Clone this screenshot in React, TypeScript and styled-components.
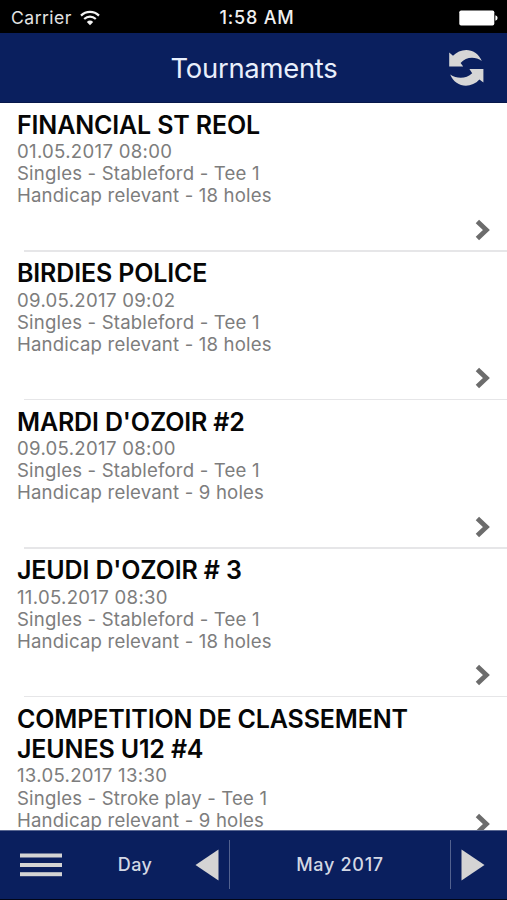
import React from "react";
import styled, { createGlobalStyle } from "styled-components";

const GlobalStyle = createGlobalStyle`
  * { box-sizing: border-box; }
  body { margin: 0; background: #fff; font-family: Inter, "Liberation Sans", sans-serif; }
`;

const Screen = styled.div`
  width: 507px;
  height: 900px;
  display: flex;
  flex-direction: column;
  overflow: hidden;
  background: #fff;
`;

const StatusBar = styled.div`
  flex: none;
  height: 33px;
  padding: 3px 9px 0 11px;
  display: grid;
  grid-template-columns: 1fr auto 1fr;
  align-items: center;
  background: #000;
  color: #e4e4e4;
  font-size: 17.6px;
  line-height: 30px;
`;

const Carrier = styled.div`
  display: flex;
  align-items: center;
  gap: 8px;
  letter-spacing: 0.45px;
`;

const Clock = styled.div`
  font-size: 18px;
  font-weight: 500;
  color: #f0f0f0;
  letter-spacing: 0.8px;
  padding-left: 5px;
`;

const BatteryIcon = styled.svg`
  justify-self: end;
`;

const Header = styled.header`
  flex: none;
  height: 69.5px;
  padding: 0 22px;
  display: grid;
  grid-template-columns: 38px 1fr 38px;
  align-items: center;
  background: #0a1f5e;
  border-bottom: 1px solid #07174a;
`;

const Title = styled.h1`
  grid-column: 2;
  margin: 0;
  padding: 2px 0 0 1px;
  text-align: center;
  font-size: 27.4px;
  font-weight: 400;
  line-height: 36px;
  color: #e9effc;
  letter-spacing: -0.25px;
`;

const IconButton = styled.button`
  padding: 0;
  border: 0;
  background: none;
  display: flex;
  align-items: center;
  justify-content: center;
`;

const List = styled.main`
  flex: 1;
  min-height: 0;
  overflow: hidden;
`;

const Row = styled.article`
  position: relative;
  height: 148.6px;
  padding: 7px 17px 0;

  & + &::before {
    content: "";
    position: absolute;
    top: -1px;
    left: 24px;
    right: 0;
    height: 1.5px;
    background: #e6e6e8;
  }
`;

const Name = styled.h2`
  margin: 0 0 0.6px;
  font-size: 25px;
  font-weight: 600;
  line-height: 30px;
  color: #060606;
  letter-spacing: -0.15px;
  white-space: pre-line;
`;

const Detail = styled.p<{ $date?: boolean }>`
  margin: 0;
  font-size: 18.6px;
  line-height: 22.1px;
  color: #7d7d7d;
  letter-spacing: ${(p) => (p.$date ? "0.3px" : "0.17px")};
`;

const Chevron = styled.svg`
  position: absolute;
  right: 16px;
  top: 116px;
`;

const Footer = styled.nav`
  flex: none;
  height: 70.5px;
  padding: 0 21px 0 19px;
  display: grid;
  grid-template-columns: 44px 132px 24px 10px 222px 10px 24px;
  align-items: center;
  background: #0a1f5e;
  border-top: 1px solid #5a6892;
  border-bottom: 1.5px solid #020617;
`;

const FooterLabel = styled.span<{ $spacing: number; $shift?: number }>`
  text-align: center;
  color: #d3d8e4;
  font-size: 18px;
  font-weight: 500;
  line-height: 24px;
  letter-spacing: ${(p) => p.$spacing}px;
  padding-left: ${(p) => p.$shift ?? 0}px;
`;

const Period = styled.div`
  grid-column: 5;
  height: 49px;
  border: solid #53628f;
  border-width: 0 1.5px;
  display: flex;
  align-items: center;
  justify-content: center;
`;

const NextButton = styled(IconButton)`
  grid-column: 7;
`;

const tournaments = [
  { name: "FINANCIAL ST REOL", date: "01.05.2017 08:00", play: "Singles - Stableford - Tee 1", holes: 18 },
  { name: "BIRDIES POLICE", date: "09.05.2017 09:02", play: "Singles - Stableford - Tee 1", holes: 18 },
  { name: "MARDI D'OZOIR #2", date: "09.05.2017 08:00", play: "Singles - Stableford - Tee 1", holes: 9 },
  { name: "JEUDI D'OZOIR # 3", date: "11.05.2017 08:30", play: "Singles - Stableford - Tee 1", holes: 18 },
  { name: "COMPETITION DE CLASSEMENT\nJEUNES U12 #4", date: "13.05.2017 13:30", play: "Singles - Stroke play - Tee 1", holes: 9 },
];

export default function App() {
  return (
    <Screen>
      <GlobalStyle />
      <StatusBar>
        <Carrier>
          Carrier
          <svg width="20" height="16" viewBox="0 0 20 16" fill="none" stroke="#f4f4f4" strokeWidth="2.2">
            <path d="M1 5.6C6 .6 14 .6 19 5.6" />
            <path d="M4.2 9C7.6 5.8 12.4 5.8 15.8 9" />
            <path d="M10 15.2 6.8 12Q10 9.2 13.2 12Z" fill="#f4f4f4" stroke="none" />
          </svg>
        </Carrier>
        <Clock>1:58 AM</Clock>
        <BatteryIcon width="39" height="16" viewBox="0 0 39 16" fill="#fff">
          <rect x="0.3" y="0.5" width="35" height="15" rx="1.8" />
          <path d="M36.4 5.3Q38.6 5.8 38.6 8T36.4 10.7Z" />
        </BatteryIcon>
      </StatusBar>
      <Header>
        <Title>Tournaments</Title>
        <IconButton aria-label="Refresh">
          <svg width="36" height="38" viewBox="0 0 36 38" fill="#d6d6d6">
            <path d="M1.2 4.6 5 7.8C12.5 -.8 28.5 -.8 33.8 13C27 8.2 18 8.8 12.6 15L15.2 18.6H1.2Z" />
            <path d="M35.4 21 V34.6L31.4 31.6C23 41 7 39.6 2.2 26.6C9 31 18 31.2 24.2 25.2L21.4 21Z" />
          </svg>
        </IconButton>
      </Header>
      <List>
        {tournaments.map((t) => (
          <Row key={t.name}>
            <Name>{t.name}</Name>
            <Detail $date>{t.date}</Detail>
            <Detail>{t.play}</Detail>
            <Detail>Handicap relevant - {t.holes} holes</Detail>
            <Chevron width="16" height="22" viewBox="0 0 16 22" fill="none" stroke="#6c6c6c" strokeWidth="4.8">
              <path d="M2.4 2.4 11.4 11 2.4 19.6" />
            </Chevron>
          </Row>
        ))}
      </List>
      <Footer>
        <IconButton aria-label="Menu">
          <svg width="42" height="24" viewBox="0 0 42 24" fill="#d4d4d4">
            <rect y="0.5" width="42" height="4" />
            <rect y="10" width="42" height="4" />
            <rect y="19.2" width="42" height="4" />
          </svg>
        </IconButton>
        <FooterLabel $spacing={0.4} $shift={12}>Day</FooterLabel>
        <IconButton aria-label="Previous">
          <svg width="24" height="32" viewBox="0 0 24 32" fill="#d4d4d4">
            <path d="M0.5 16 23.5 0.5V31.5Z" />
          </svg>
        </IconButton>
        <Period>
          <FooterLabel $spacing={0.7}>May 2017</FooterLabel>
        </Period>
        <NextButton aria-label="Next">
          <svg width="24" height="32" viewBox="0 0 24 32" fill="#d4d4d4">
            <path d="M23.5 16 0.5 0.5V31.5Z" />
          </svg>
        </NextButton>
      </Footer>
    </Screen>
  );
}
